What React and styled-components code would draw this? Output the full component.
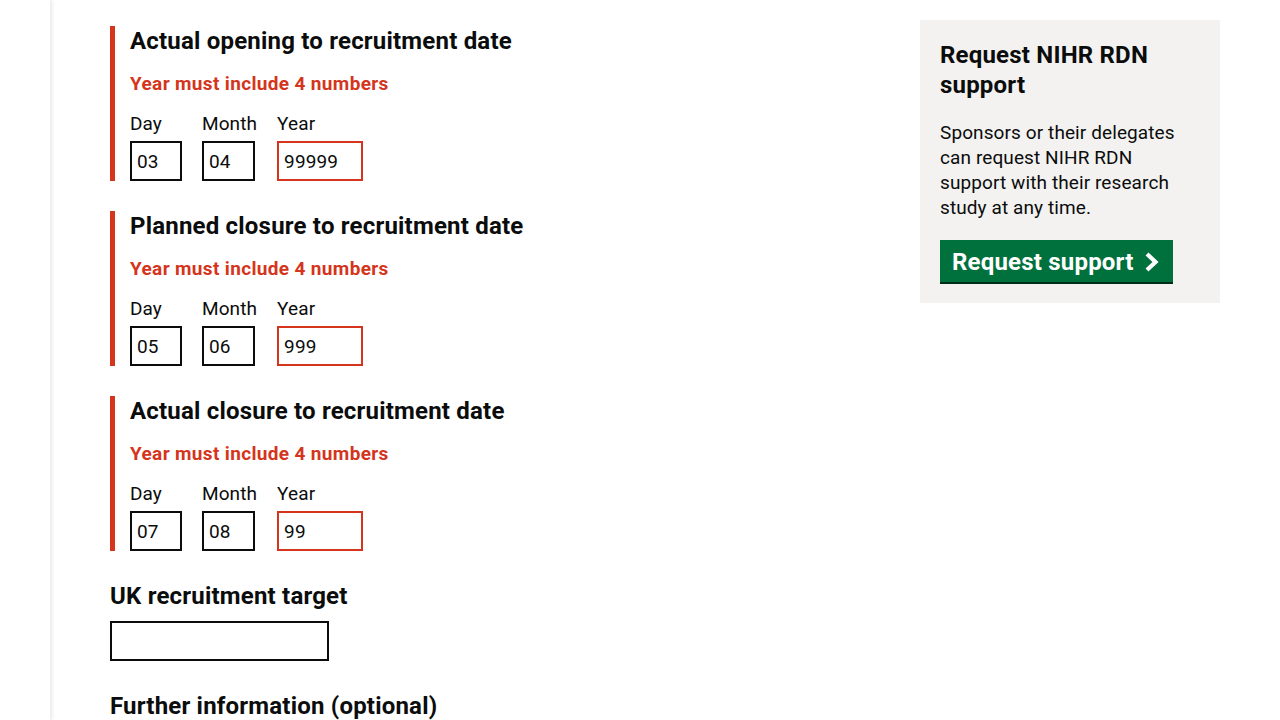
import React from "react";
import styled, { createGlobalStyle } from "styled-components";

const Global = createGlobalStyle`
  html, body { margin: 0; padding: 0; background: #fff; }
  body { font-family: Roboto, "Liberation Sans", Arial, sans-serif; color: #0b0c0c; overflow: hidden; letter-spacing: 0.1px; }
  * { box-sizing: border-box; }
`;

const Page = styled.div`
  display: flex;
  height: 720px;
  overflow: hidden;
`;

const SideNav = styled.nav`
  flex: 0 0 50px;
  background: #fff;
  box-shadow: 2px 0 4px rgba(0, 0, 0, 0.09);
  position: relative;
  z-index: 1;
`;

const Main = styled.main`
  flex: 1;
  display: flex;
  gap: 30px;
  padding: 20px 60px 0 60px;
  align-items: flex-start;
`;

const FormCol = styled.div`
  flex: 1;
  padding-top: 6px;
`;

const ErrorGroup = styled.fieldset`
  margin: 0 0 30px 0;
  padding: 0 0 0 15px;
  border: none;
  border-left: 5px solid #d4351c;
`;

const Legend = styled.h2`
  margin: 0 0 15px 0;
  font-size: 24px;
  line-height: 30px;
  font-weight: 700;
  letter-spacing: 0.2px;
`;

const ErrorMessage = styled.p`
  margin: 0 0 15px 0;
  font-size: 19px;
  line-height: 25px;
  font-weight: 700;
  letter-spacing: 0.35px;
  color: #d4351c;
`;

const DateRow = styled.div`
  display: flex;
  gap: 20px;
`;

const DateItem = styled.div`
  display: flex;
  flex-direction: column;
`;

const Label = styled.label`
  font-size: 19px;
  line-height: 25px;
  margin-bottom: 5px;
`;

const Input = styled.input`
  width: ${(p) => p.$w}px;
  height: 40px;
  padding: 5px;
  border: 2px solid ${(p) => (p.$error ? "#d4351c" : "#0b0c0c")};
  border-radius: 0;
  font-family: inherit;
  font-size: 19px;
  line-height: 25px;
  letter-spacing: 0.1px;
  color: #0b0c0c;
  background: #fff;
  outline: none;
`;

const FieldHeading = styled.h2`
  margin: 0 0 10px 0;
  font-size: 24px;
  line-height: 30px;
  font-weight: 700;
  letter-spacing: 0.2px;
`;

const Field = styled.div`
  margin-bottom: 30px;
`;

const Aside = styled.aside`
  flex: 0 0 300px;
  background: #f3f2f1;
  padding: 20px 20px 18px 20px;
`;

const AsideTitle = styled.h2`
  margin: 0 0 20px 0;
  font-size: 24px;
  line-height: 30px;
  font-weight: 700;
  letter-spacing: 0.2px;
`;

const AsideText = styled.p`
  margin: 0 0 20px 0;
  font-size: 19px;
  line-height: 25px;
`;

const Button = styled.a`
  display: inline-flex;
  align-items: center;
  gap: 9px;
  height: 42px;
  margin-bottom: 3px;
  padding: 2px 12px 0 12px;
  background: #00703c;
  box-shadow: 0 2px 0 #002d18;
  color: #fff;
  font-size: 24px;
  font-weight: 700;
  line-height: 30px;
  letter-spacing: 0.2px;
  text-decoration: none;
`;

const dates = [
  { title: "Actual opening to recruitment date", d: "03", m: "04", y: "99999" },
  { title: "Planned closure to recruitment date", d: "05", m: "06", y: "999" },
  { title: "Actual closure to recruitment date", d: "07", m: "08", y: "99" },
];

function Chevron() {
  return (
    <svg width="18" height="20" viewBox="0 0 18 20" aria-hidden="true">
      <polyline points="4,2 12.5,10 4,18" fill="none" stroke="#fff" strokeWidth="4.2" strokeLinejoin="miter" />
    </svg>
  );
}

export default function App() {
  return (
    <>
      <Global />
      <Page>
        <SideNav />
        <Main>
          <FormCol>
            {dates.map((g) => (
              <ErrorGroup key={g.title}>
                <Legend>{g.title}</Legend>
                <ErrorMessage>Year must include 4 numbers</ErrorMessage>
                <DateRow>
                  <DateItem>
                    <Label>Day</Label>
                    <Input $w={52} defaultValue={g.d} />
                  </DateItem>
                  <DateItem>
                    <Label>Month</Label>
                    <Input $w={53} defaultValue={g.m} />
                  </DateItem>
                  <DateItem>
                    <Label>Year</Label>
                    <Input $w={86} $error defaultValue={g.y} />
                  </DateItem>
                </DateRow>
              </ErrorGroup>
            ))}
            <Field>
              <FieldHeading>UK recruitment target</FieldHeading>
              <Input $w={219} />
            </Field>
            <Field>
              <FieldHeading>Further information (optional)</FieldHeading>
            </Field>
          </FormCol>
          <Aside>
            <AsideTitle>Request NIHR RDN support</AsideTitle>
            <AsideText>
              Sponsors or their delegates can request NIHR RDN support with their research study at any time.
            </AsideText>
            <Button href="#">
              Request support
              <Chevron />
            </Button>
          </Aside>
        </Main>
      </Page>
    </>
  );
}
